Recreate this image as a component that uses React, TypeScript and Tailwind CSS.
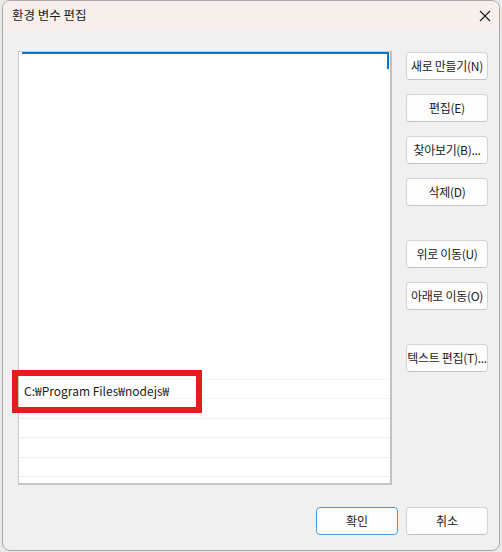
import React from "react";

const font = { fontFamily: '"Noto Sans CJK KR", "Noto Sans", sans-serif' };

function SideButton({ label, className = "" }: { label: string; className?: string }) {
  return (
    <button
      className={`h-[28px] w-[82px] flex items-center justify-center whitespace-nowrap overflow-hidden rounded-[4px] border border-[#d3d3d3] border-b-[#c2c2c2] bg-[#fdfdfd] text-[12px] text-[#1b1b1b] tracking-[-0.3px] ${className}`}
    >
      {label}
    </button>
  );
}

export default function App() {
  const rows = [0, 1, 2, 3];

  return (
    <div className="w-[502px] h-[552px] bg-[#e9e9e9]" style={font}>
      <div className="ml-[2px] w-[498px] h-[551px] flex flex-col rounded-[8px] border border-[#a8a8a8] bg-[#f0f0f0] overflow-hidden">
        {/* title bar */}
        <div className="h-[29px] shrink-0 flex items-center justify-between bg-[#f7efec] pl-[9px] pr-[7px]">
          <span className="text-[12.5px] text-[#1a1a1a]">환경 변수 편집</span>
          <svg width="12" height="12" viewBox="0 0 12 12" className="mr-[1px] mt-[1px]">
            <path d="M1 1 L11 11 M11 1 L1 11" stroke="#1a1a1a" strokeWidth="1.1" />
          </svg>
        </div>

        {/* body */}
        <div className="flex pt-[21px] pl-[15px] pr-[11px]">
          <div className="relative w-[374px] h-[434px] flex flex-col bg-white border-l border-t border-[#c9c9c9] border-r-2 border-b-2 border-r-[#c2c2c2] border-b-[#c6c6c6]">
            <div className="ml-[3px] mr-[1px] h-[17px] border-t-2 border-r-2 border-[#0078d4]" />
            <div className="flex-1" />
            <div className="h-[20px] flex items-center pl-[5px] pt-[4px] border-t border-b border-[#faf2f2] text-[12px] text-[#1b1b1b]">
              C:₩Program Files₩nodejs₩
            </div>
            {rows.map((r) => (
              <div key={r} className="h-[19.5px] border-b border-[#eeeeee]" />
            ))}
            <div className="h-[6px]" />
            {/* red highlight annotation */}
            <div className="absolute left-[-7px] top-[318px] w-[190px] h-[43px] border-[6px] border-[#e21d1f]" />
          </div>

          <div className="ml-[14px] mt-[1px] flex flex-col">
            <SideButton label="새로 만들기(N)" />
            <SideButton label="편집(E)" className="mt-[14px]" />
            <SideButton label="찾아보기(B)..." className="mt-[14px]" />
            <SideButton label="삭제(D)" className="mt-[14px]" />
            <SideButton label="위로 이동(U)" className="mt-[34px]" />
            <SideButton label="아래로 이동(O)" className="mt-[14px]" />
            <SideButton label="텍스트 편집(T)..." className="mt-[34px]" />
          </div>
        </div>

        {/* footer */}
        <div className="flex justify-end gap-[8px] pt-[22px] pr-[11px]">
          <button className="h-[28px] w-[82px] flex items-center justify-center rounded-[4px] border border-[#4a9ad8] bg-[#fdfdfd] text-[12px] text-[#1b1b1b]">
            확인
          </button>
          <button className="h-[28px] w-[82px] flex items-center justify-center rounded-[4px] border border-[#d3d3d3] border-b-[#c2c2c2] bg-[#fdfdfd] text-[12px] text-[#1b1b1b]">
            취소
          </button>
        </div>
      </div>
    </div>
  );
}
